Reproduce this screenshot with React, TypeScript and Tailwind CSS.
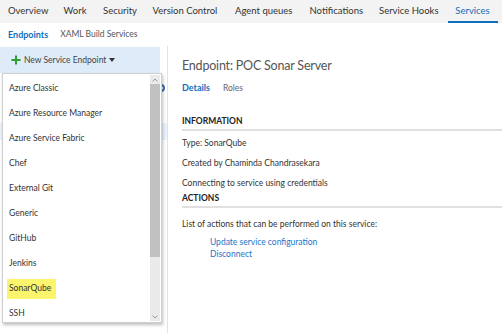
import { useState } from "react";

const tabs = [
  { label: "Overview", cls: "w-[40px]" },
  { label: "Work", cls: "w-[24px]" },
  { label: "Security", cls: "w-[34px]" },
  { label: "Version Control", cls: "w-[67px]" },
  { label: "Agent queues", cls: "w-[59px]" },
  { label: "Notifications", cls: "w-[54px]" },
  { label: "Service Hooks", cls: "w-[60px]" },
];

const endpointTypes = [
  "Azure Classic",
  "Azure Resource Manager",
  "Azure Service Fabric",
  "Chef",
  "External Git",
  "Generic",
  "GitHub",
  "Jenkins",
  "SonarQube",
  "SSH",
];

const font = { fontFamily: 'Lato, "Open Sans", "Liberation Sans", sans-serif' };

const App = () => {
  const [picked] = useState("SonarQube");

  return (
    <div
      className="w-[502px] h-[333px] bg-white overflow-hidden text-[#333] relative"
      style={font}
    >
      {/* top hub tabs */}
      <div className="h-[23px] bg-[#f3f3f3] flex items-stretch pl-[8px] gap-[15.5px] text-[9.5px] text-[#333]">
        {tabs.map((t) => (
          <div key={t.label} className={`${t.cls} flex items-center whitespace-nowrap`}>
            {t.label}
          </div>
        ))}
        <div className="relative w-[50px] -ml-[7px] flex items-center justify-center text-[#106ebe] whitespace-nowrap">
          Services
          <div className="absolute left-0 right-0 bottom-0 h-[2px] bg-[#106ebe]" />
        </div>
      </div>

      {/* sub tabs */}
      <div className="h-[23px] flex items-center pl-[8px] gap-[12px]">
        <span className="font-bold text-[9px] text-[#106ebe]">Endpoints</span>
        <span className="text-[8.5px] text-[#555]">XAML Build Services</span>
      </div>

      <div className="flex h-[287px]">
        {/* left panel */}
        <div className="w-[167px] flex flex-col pt-[1px]">
          <div className="w-[160px] h-[26px] bg-[#deebf8] flex items-center pl-[11px] text-[8.5px] text-[#444]">
            <svg width="10" height="10" viewBox="0 0 10 10" className="mr-[3px]">
              <path d="M5 0.5v9M0.5 5h9" stroke="#2e9e2e" strokeWidth="2" />
            </svg>
            <span>New Service Endpoint</span>
            <svg width="6" height="4" viewBox="0 0 6 4" className="ml-[3px]">
              <path d="M0 0h6L3 4z" fill="#333" />
            </svg>
          </div>
          <div className="relative flex-1">
            <div className="absolute right-[2px] top-[11px] w-[8px] h-[8px] rounded-full border-[2px] border-[#3b6fb6]" />
            <div className="absolute left-0 right-0 top-[50px] h-[17px] bg-[#eaf2fb]" />
          </div>
        </div>
        <div className="w-px bg-[#e3e3e3]" />

        {/* details */}
        <div className="flex-1 pl-[14px] pt-[10px]">
          <div className="text-[12.5px] tracking-[-0.2px] text-[#555] leading-[20px]">
            Endpoint: POC Sonar Server
          </div>
          <div className="flex gap-[13px] mt-[5px] leading-[14px]">
            <span className="font-bold text-[9px] text-[#106ebe]">Details</span>
            <span className="text-[8.5px] text-[#666]">Roles</span>
          </div>
          <div className="mt-[19px] text-[8.5px] font-bold text-[#222] leading-[14px]">
            INFORMATION
          </div>
          <div className="h-[2px] bg-[#e0e0e0] mt-[1px]" />
          <div className="text-[8.5px] leading-[20px] mt-[2px]">
            <div>Type: {picked}</div>
            <div>Created by Chaminda Chandrasekara</div>
            <div>Connecting to service using credentials</div>
          </div>
          <div className="text-[8.5px] font-bold text-[#222] leading-[14px] -mt-[2px]">
            ACTIONS
          </div>
          <div className="h-[2px] bg-[#e0e0e0] mt-[1px]" />
          <div className="text-[8.5px] leading-[14px] mt-[9px]">
            List of actions that can be performed on this service:
          </div>
          <div className="text-[8.5px] leading-[12px] mt-[5px] pl-[28px] text-[#1e73c8] flex flex-col items-start">
            <span>Update service configuration</span>
            <span>Disconnect</span>
          </div>
        </div>
      </div>

      {/* dropdown menu overlay */}
      <div className="absolute left-[2px] top-[73px] w-[160px] h-[250px] bg-white border border-[#cfcfcf] shadow-[1px_2px_3px_rgba(0,0,0,0.25)] flex">
        <div className="flex-1 pt-[2px] text-[8.5px] text-[#333]">
          {endpointTypes.map((name) => (
            <div key={name} className="h-[25px] flex items-center pl-[4px]">
              <span
                className={
                  name === picked
                    ? "bg-[#fbf56e] px-[2px] h-[20px] w-[49px] flex items-center"
                    : "px-[2px]"
                }
              >
                {name}
              </span>
            </div>
          ))}
        </div>
        <div className="w-[10px] my-[1px] mr-[1px] bg-[#eaeaea] flex flex-col items-center">
          <div className="h-[9px] flex items-center">
            <svg width="6" height="4" viewBox="0 0 6 4">
              <path d="M0.5 3.5L3 1l2.5 2.5" stroke="#999" fill="none" />
            </svg>
          </div>
          <div className="w-full h-[173px] bg-[#c1c1c1]" />
          <div className="flex-1" />
          <div className="h-[9px] flex items-center">
            <svg width="6" height="4" viewBox="0 0 6 4">
              <path d="M0.5 0.5L3 3l2.5-2.5" stroke="#999" fill="none" />
            </svg>
          </div>
        </div>
      </div>
    </div>
  );
};

export default App;
